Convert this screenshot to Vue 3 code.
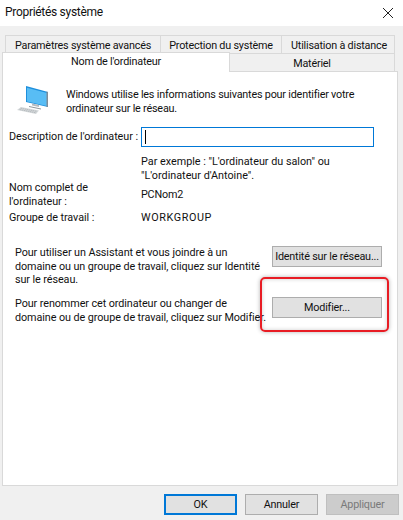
<template>
  <div class="dialog">
    <header class="titlebar">
      <span class="title">Propriétés système</span>
      <svg class="close" width="12" height="12" viewBox="0 0 12 12"><path d="M1 1L11 11M11 1L1 11" stroke="#222" stroke-width="1" fill="none"/></svg>
    </header>
    <div class="body">
      <div class="tabrow back">
        <div class="tab t1">Paramètres système avancés</div>
        <div class="tab t2">Protection du système</div>
        <div class="tab t3">Utilisation à distance</div>
      </div>
      <div class="tabrow front">
        <div class="tab active">Nom de l'ordinateur</div>
        <div class="tab hw">Matériel</div>
      </div>
      <section class="panel">
        <div class="intro">
          <svg class="pc" width="34" height="32" viewBox="0 0 34 32">
            <path d="M9 0L31 6V21L9 16Z" fill="#1e8fdc"/>
            <path d="M10 1.800L30 7V20L10 15.500Z" fill="#58bdf5"/>
            <path d="M31 6V21L29.500 20.700V5.600Z" fill="#7f8d99"/>
            <path d="M15 17.500L22 19V21L15 19.500Z" fill="#b4babf"/>
            <path d="M12 20L24 22.500V23.500L12 21Z" fill="#8f979d"/>
            <path d="M4 21L22 24.500L19 28L0 24Z" fill="#d4d8da"/>
            <path d="M3.500 22.200L20 25.400M2.500 23.500L19 26.800" stroke="#a9afb3" stroke-width="0.700" stroke-dasharray="1.500 0.600" fill="none"/>
          </svg>
          <p>Windows utilise les informations suivantes pour identifier votre<br>ordinateur sur le réseau.</p>
        </div>
        <div class="desc">
          <label class="lab">Description de l'ordinateur :</label>
          <div class="input"><i class="caret"></i></div>
        </div>
        <p class="example">Par exemple : "L'ordinateur du salon" ou<br>"L'ordinateur d'Antoine".</p>
        <div class="info full">
          <span class="lab">Nom complet de<br>l'ordinateur :</span>
          <span>PCNom2</span>
        </div>
        <div class="info group">
          <span class="lab">Groupe de travail :</span>
          <span class="wg">WORKGROUP</span>
        </div>
        <div class="action a1">
          <p>Pour utiliser un Assistant et vous joindre à un<br>domaine ou un groupe de travail, cliquez sur Identité<br>sur le réseau.</p>
          <button class="btn wide">Identité sur le réseau...</button>
        </div>
        <div class="action a2">
          <p>Pour renommer cet ordinateur ou changer de<br>domaine ou de groupe de travail, cliquez sur Modifier.</p>
          <button class="btn wide">Modifier...</button>
          <div class="highlight"></div>
        </div>
      </section>
      <footer class="footer">
        <button class="btn foot primary">OK</button>
        <button class="btn foot">Annuler</button>
        <button class="btn foot disabled">Appliquer</button>
      </footer>
    </div>
  </div>
</template>

<script setup>
</script>

<style>
html, body { margin: 0; background: #f0f0f0; }
</style>

<style scoped>
.dialog {
  width: 403px;
  height: 520px;
  overflow: hidden;
  font-family: Roboto, "Liberation Sans", sans-serif;
  font-size: 10.8px;
  letter-spacing: -0.2px;
  line-height: 13.5px;
  color: #111;
  background: #f0f0f0;
  white-space: nowrap;
}
p { margin: 0; }
.titlebar {
  height: 26px;
  background: #fff;
  display: flex;
  align-items: center;
  justify-content: space-between;
  padding: 0 9px 0 5px;
  font-size: 12px;
  letter-spacing: -0.3px;
}
.body { padding: 9px 5px 0 2px; }
.tabrow { display: flex; }
.tab {
  box-sizing: border-box;
  text-align: center;
  border: 1px solid #d9d9d9;
  border-bottom: 0;
  background: #f0f0f0;
}
.back { padding-left: 3px; height: 18px; }
.t1 { width: 156px; line-height: 19px; }
.t2 { width: 122px; margin-left: -1px; line-height: 19px; }
.t3 { width: 114px; margin-left: -1px; line-height: 19px; padding-left: 2px; }
.front { height: 19px; position: relative; z-index: 1; margin-top: -1px; }
.active {
  width: 228px;
  height: 20px;
  background: #fff;
  line-height: 17px;
}
.hw {
  width: 166px;
  height: 19px;
  margin-top: 1px;
  margin-left: -1px;
  border-bottom: 1px solid #d9d9d9;
  line-height: 19px;
}
.panel {
  box-sizing: border-box;
  width: 396px;
  height: 415px;
  background: #fff;
  border: 1px solid #d9d9d9;
}
.intro { display: flex; padding: 14px 0 0 14px; height: 41px; }
.pc { flex: none; margin-right: 15px; }
.intro p { margin-top: 2px; }
.desc { display: flex; align-items: center; padding-left: 6px; }
.lab { width: 132px; flex: none; letter-spacing: -0.05px; }
.input {
  box-sizing: border-box;
  width: 233px;
  height: 20px;
  border: 1px solid #0078d7;
  background: #fff;
  padding: 2px 0 0 3px;
}
.caret { display: block; width: 1px; height: 14px; background: #000; }
.example { margin: 8px 0 0 138px; letter-spacing: 0; }
.info { display: flex; align-items: center; padding-left: 6px; }
.full { margin-top: -1px; }
.group { margin-top: 3px; }
.wg { letter-spacing: 0.6px; }
.action { display: flex; position: relative; justify-content: space-between; padding: 0 15px 0 12px; }
.action p { letter-spacing: -0.08px; }
.a1 { margin-top: 21.5px; }
.a2 { margin-top: 10.5px; }
.btn {
  box-sizing: border-box;
  font: inherit;
  letter-spacing: inherit;
  color: #111;
  background: #e1e1e1;
  border: 1px solid #adadad;
  padding: 0;
  flex: none;
}
.wide { width: 110px; height: 21px; }
.highlight {
  position: absolute;
  left: 257px;
  top: -20px;
  width: 129px;
  height: 55px;
  box-sizing: border-box;
  border: 2px solid #e81c24;
  border-radius: 5px;
  box-shadow: 0 0 4px rgba(0,0,0,.3), inset 0 0 4px rgba(0,0,0,.2);
}
.footer { display: flex; justify-content: flex-end; gap: 8px; margin: 8px -1px 0 0; }
.foot { width: 73px; height: 21px; }
.primary { border: 2px solid #0078d7; }
.disabled { background: #cccccc; border-color: #bfbfbf; color: #7a7a7a; }
</style>
